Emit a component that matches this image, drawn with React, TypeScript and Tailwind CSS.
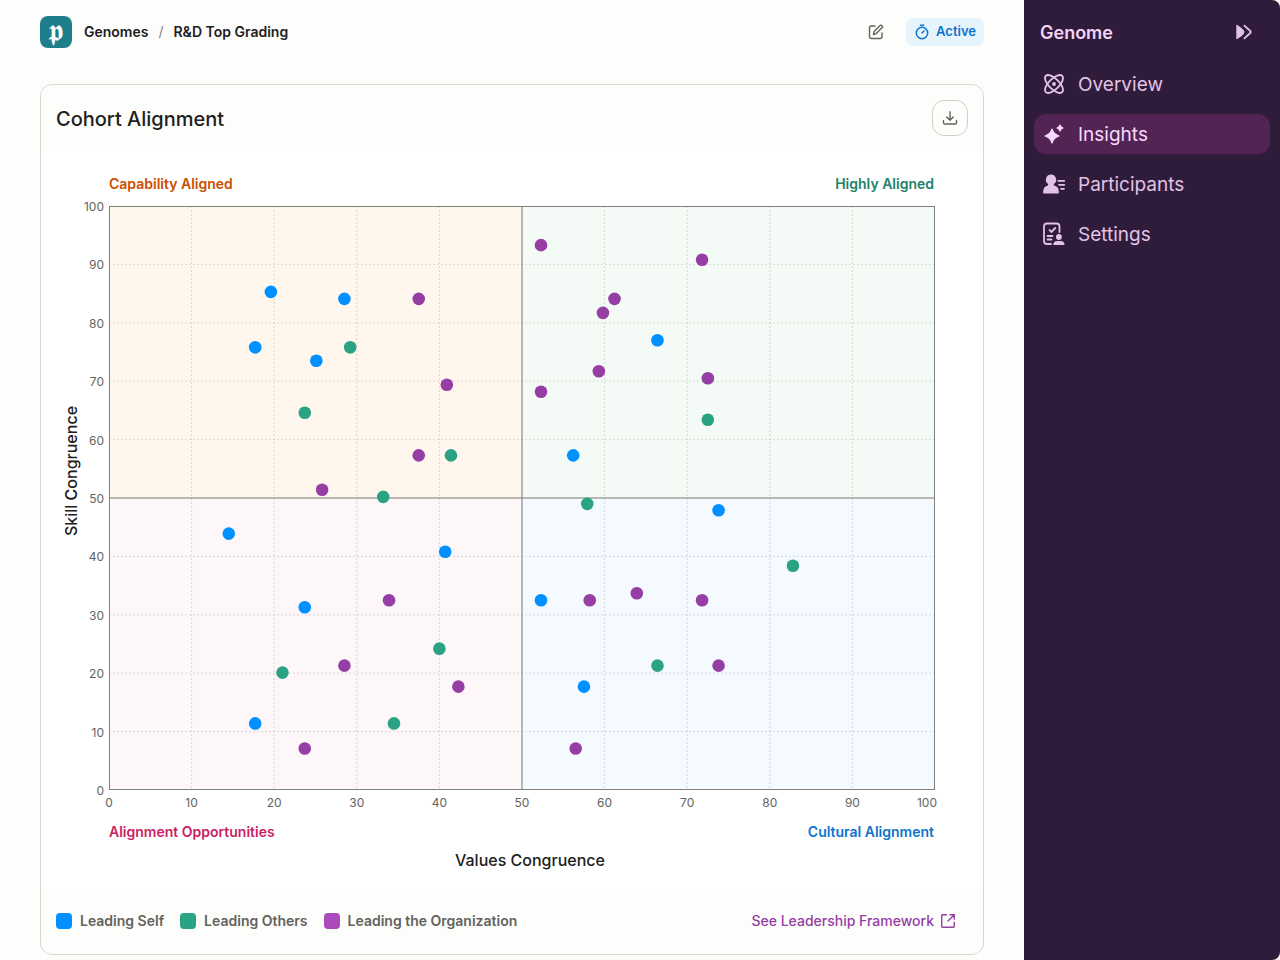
import React from 'react';

type Series = 'self' | 'others' | 'organization';

interface Point {
  x: number;
  y: number;
  series: Series;
}

const PLOT = { left: 68, top: 54, width: 826, height: 584 };

const DOT_COLORS: Record<Series, string> = {
  self: '#0090ff',
  others: '#29a383',
  organization: '#953ea3',
};

const toPoints = (series: Series, pairs: number[][]): Point[] =>
  pairs.map(([x, y]) => ({ x, y, series }));

const points: Point[] = [
  ...toPoints('self', [
    [19.6, 85.3], [28.5, 84.1], [17.7, 75.8], [25.1, 73.5], [14.5, 43.9], [40.7, 40.8], [23.7, 31.3],
    [17.7, 11.4], [66.4, 77], [56.2, 57.3], [73.8, 47.9], [52.3, 32.5], [57.5, 17.7],
  ]),
  ...toPoints('others', [
    [29.2, 75.8], [23.7, 64.6], [41.4, 57.3], [33.2, 50.2], [57.9, 49], [72.5, 63.4],
    [82.8, 38.4], [66.4, 21.3], [40, 24.2], [21, 20.1], [34.5, 11.4],
  ]),
  ...toPoints('organization', [
    [37.5, 84.1], [40.9, 69.4], [37.5, 57.3], [25.8, 51.4], [33.9, 32.5], [28.5, 21.3], [42.3, 17.7],
    [23.7, 7.1], [52.3, 93.3], [71.8, 90.8], [61.2, 84.1], [59.8, 81.7], [59.3, 71.7], [52.3, 68.2],
    [72.5, 70.5], [63.9, 33.7], [58.2, 32.5], [71.8, 32.5], [73.8, 21.3], [56.5, 7.1],
  ]),
];

const ticks = [0, 10, 20, 30, 40, 50, 60, 70, 80, 90, 100];
const gridTicks = [10, 20, 30, 40, 60, 70, 80, 90];

const scaleX = (v: number) => PLOT.left + (v / 100) * PLOT.width;
const scaleY = (v: number) => PLOT.top + PLOT.height - (v / 100) * PLOT.height;

const AlignmentChart: React.FC = () => {
  const right = PLOT.left + PLOT.width;
  const bottom = PLOT.top + PLOT.height;
  const midX = scaleX(50);
  const midY = scaleY(50);

  return (
    <svg viewBox="0 0 942 736" className="block w-full h-auto" role="img" aria-label="Cohort alignment scatter chart">
      <rect x={PLOT.left} y={PLOT.top} width={midX - PLOT.left} height={midY - PLOT.top} fill="#fff6ed" />
      <rect x={midX} y={PLOT.top} width={right - midX} height={midY - PLOT.top} fill="#f4faf6" />
      <rect x={PLOT.left} y={midY} width={midX - PLOT.left} height={bottom - midY} fill="#fef7fa" />
      <rect x={midX} y={midY} width={right - midX} height={bottom - midY} fill="#f4faff" />

      <g stroke="#8d8d86" strokeOpacity="0.3" strokeDasharray="2 2">
        {gridTicks.map((t) => (
          <React.Fragment key={t}>
            <line x1={scaleX(t)} x2={scaleX(t)} y1={PLOT.top} y2={bottom} />
            <line x1={PLOT.left} x2={right} y1={scaleY(t)} y2={scaleY(t)} />
          </React.Fragment>
        ))}
      </g>

      <g stroke="#82827c" strokeOpacity="0.55" strokeWidth="2">
        <line x1={midX} x2={midX} y1={PLOT.top} y2={bottom} />
        <line x1={PLOT.left} x2={right} y1={midY} y2={midY} />
      </g>
      <rect x={PLOT.left + 0.5} y={PLOT.top + 0.5} width={PLOT.width - 1} height={PLOT.height - 1} fill="none" stroke="#82827c" />

      {points.map((p, i) => (
        <circle key={i} cx={scaleX(p.x)} cy={scaleY(p.y)} r="6.3" fill={DOT_COLORS[p.series]} />
      ))}

      <g className="text-[12px]" fill="#63635e">
        {ticks.map((t) => (
          <React.Fragment key={t}>
            <text x="63" y={scaleY(t) + 5} textAnchor="end">{t}</text>
            <text x={t === 100 ? 896 : scaleX(t)} y="655" textAnchor={t === 100 ? 'end' : 'middle'}>{t}</text>
          </React.Fragment>
        ))}
      </g>

      <g className="text-[14px] font-semibold">
        <text x="68" y="37" fill="#cc4e00">Capability Aligned</text>
        <text x="893" y="37" textAnchor="end" fill="#208368">Highly Aligned</text>
        <text x="68" y="685" fill="#cb1d63">Alignment Opportunities</text>
        <text x="893" y="685" textAnchor="end" fill="#0d74ce">Cultural Alignment</text>
      </g>
      <g className="text-[16px] font-medium" fill="#21201c" textAnchor="middle">
        <text x="489" y="714">Values Congruence</text>
        <text transform="translate(36 319) rotate(-90)">Skill Congruence</text>
      </g>
    </svg>
  );
};

const EditIcon = () => (
  <svg className="w-4 h-4" viewBox="0 0 16 16" fill="none" stroke="currentColor" strokeWidth="1.4" strokeLinecap="round" strokeLinejoin="round" aria-hidden="true">
    <path d="M7 2H3.2Q1.5 2 1.5 3.7v9.1q0 1.7 1.7 1.7h9.1q1.7 0 1.7-1.7V9" />
    <path d="M5.5 10.5l.6-3 6-6q.8-.7 1.6 0l.5.5q.8.8 0 1.6l-6 6z" />
  </svg>
);

const TimerIcon = () => (
  <svg className="w-4 h-4" viewBox="0 0 16 16" fill="none" stroke="currentColor" strokeWidth="1.5" strokeLinecap="round" aria-hidden="true">
    <circle cx="8" cy="9" r="5.7" />
    <path d="M6.4 1.2h3.2M8 9l2-2" />
  </svg>
);

const DownloadIcon = () => (
  <svg className="w-4 h-4" viewBox="0 0 16 16" fill="none" stroke="currentColor" strokeWidth="1.4" strokeLinecap="round" strokeLinejoin="round" aria-hidden="true">
    <path d="M8 1.7v8.4M4.7 7L8 10.2 11.3 7M1.5 10.5v2.2q0 1.3 1.3 1.3h10.4q1.3 0 1.3-1.3v-2.2" />
  </svg>
);

const ExternalIcon = () => (
  <svg className="w-4 h-4" viewBox="0 0 16 16" fill="none" stroke="currentColor" strokeWidth="1.4" strokeLinecap="round" strokeLinejoin="round" aria-hidden="true">
    <path d="M6.5 1.7H2.7q-1 0-1 1v10.6q0 1 1 1h10.6q1 0 1-1V9.5M10 1.7h4.3V6M14.3 1.7L8 8" />
  </svg>
);

const CollapseIcon = () => (
  <svg className="w-4 h-4" viewBox="0 0 16 16" fill="currentColor" aria-hidden="true">
    <path d="M.3 1.8Q.3.2 1.7 1.2Q8.5 5.6 8.5 8Q8.500 10.400 1.700 14.800Q.3 15.800.3 14.200z" />
    <path d="M8.400 1.600L14.300 7q1 1 0 2L8.400 14.400" fill="none" stroke="currentColor" strokeWidth="1.800" strokeLinecap="round" />
  </svg>
);

const AtomIcon = () => (
  <svg className="w-6 h-6" viewBox="0 0 24 24" fill="none" stroke="currentColor" strokeWidth="1.8" aria-hidden="true">
    <path d="M20.2 20.2c2.04-2.03.02-7.36-4.5-11.9-4.54-4.52-9.87-6.54-11.9-4.5-2.04 2.03-.02 7.36 4.5 11.9 4.54 4.52 9.87 6.54 11.9 4.5Z" />
    <path d="M15.7 15.7c4.52-4.54 6.54-9.87 4.5-11.9-2.03-2.04-7.36-.02-11.9 4.5-4.52 4.54-6.54 9.87-4.5 11.9 2.03 2.04 7.36.02 11.9-4.5Z" />
    <circle cx="12" cy="12" r="1.9" fill="currentColor" stroke="none" />
  </svg>
);

const SparkleIcon = () => (
  <svg className="w-6 h-6" viewBox="0 0 24 24" fill="currentColor" stroke="currentColor" strokeWidth="1.2" strokeLinejoin="round" aria-hidden="true">
    <path d="M10 7Q11.6 12.400 17 14Q11.600 15.600 10 21Q8.400 15.600 3 14Q8.400 12.400 10 7z" />
    <path d="M18 3Q18.700 5.300 21 6Q18.700 6.700 18 9Q17.300 6.700 15 6Q17.300 5.300 18 3z" />
  </svg>
);

const ParticipantsIcon = () => (
  <svg className="w-6 h-6" viewBox="0 0 24 24" fill="currentColor" aria-hidden="true">
    <path d="M9 2.5a5.2 5.2 0 0 1 3.4 9.1q-1 .9-.4 1.9q4.800 1.200 4.800 6v1.500q0 .5-.5.5H1.700q-.5 0-.5-.5v-1.500q0-4.800 4.800-6q.6-1-.4-1.900A5.200 5.200 0 0 1 9 2.500z" />
    <path d="M16.200 8.800h6.100M17 12.800h5.300M19 16.800h3" stroke="currentColor" strokeWidth="1.700" strokeLinecap="round" />
  </svg>
);

const SettingsIcon = () => (
  <svg className="w-6 h-6" viewBox="0 0 24 24" fill="none" stroke="currentColor" strokeWidth="1.8" strokeLinecap="round" strokeLinejoin="round" aria-hidden="true">
    <path d="M9 22H5q-3 0-3-3V4.500q0-3 3-3h9.500q3 0 3 3V10" />
    <path d="M7.500 8l1.800 2 4-4M5.500 14h5M5.500 17.500h4" />
    <circle cx="16.900" cy="15" r="2.900" fill="currentColor" stroke="none" />
    <path d="M11.300 23q0-4 3.900-4h3.400q3.900 0 3.900 4z" fill="currentColor" stroke="none" />
  </svg>
);

const navItems = [
  { label: 'Overview', Icon: AtomIcon, active: false },
  { label: 'Insights', Icon: SparkleIcon, active: true },
  { label: 'Participants', Icon: ParticipantsIcon, active: false },
  { label: 'Settings', Icon: SettingsIcon, active: false },
];

const legend = [
  { label: 'Leading Self', swatch: 'bg-[#0090ff]' },
  { label: 'Leading Others', swatch: 'bg-[#29a383]' },
  { label: 'Leading the Organization', swatch: 'bg-[#ab4aba]' },
];

const Sidebar: React.FC = () => (
  <aside className="w-64 shrink-0 rounded-r-lg bg-[#2f1c3b] px-2.5 text-[#e3c2e6]">
    <div className="flex items-center justify-between h-16 pl-1.5 pr-4.5">
      <h2 className="pt-0.5 text-lg font-semibold text-[#f3d4f7]">Genome</h2>
      <button type="button" aria-label="Collapse sidebar">
        <CollapseIcon />
      </button>
    </div>
    <nav className="flex flex-col gap-2.5">
      {navItems.map(({ label, Icon, active }) => (
        <a
          key={label}
          href="#"
          aria-current={active ? 'page' : undefined}
          className={`flex items-center gap-3 h-10 px-2 rounded-xl text-[19px] ${active ? 'bg-[#512454] text-[#f8d8fb]' : ''}`}
        >
          <Icon />
          <span className="pt-0.5">{label}</span>
        </a>
      ))}
    </nav>
  </aside>
);

const App: React.FC = () => {
  return (
    <div className="flex min-h-screen bg-[#fdfdfc] font-['Inter',sans-serif] text-[#21201c]">
      <main className="flex-1 min-w-0 px-10 pb-1">
        <header className="flex items-center justify-between h-16">
          <nav aria-label="Breadcrumb" className="flex items-center text-sm font-semibold">
            <span className="flex items-center justify-center w-8 h-8 mr-3 pr-px pb-1 rounded-lg bg-[#1f7e8c] text-white text-[30px] font-normal leading-none" aria-hidden="true">𝖕</span>
            <a href="#">Genomes</a>
            <span className="px-2.5 font-normal text-[#82827c]">/</span>
            <a href="#" aria-current="page">R&amp;D Top Grading</a>
          </nav>
          <div className="flex items-center gap-5.5">
            <button type="button" aria-label="Edit" className="text-[#63635e]">
              <EditIcon />
            </button>
            <span className="flex items-center gap-1.5 h-7 px-2 rounded-lg bg-[#e6f4fe] text-[13px] font-semibold text-[#0d74ce]">
              <TimerIcon />
              Active
            </span>
          </div>
        </header>

        <section className="mt-5 border border-[#dad9d6] rounded-xl overflow-hidden">
          <div className="flex items-center justify-between h-[67px] px-[15px] pb-px">
            <h1 className="pt-0.5 text-xl font-medium">Cohort Alignment</h1>
            <button type="button" aria-label="Download chart" className="flex items-center justify-center w-9 h-9 rounded-xl border border-[#cfceca] text-[#63635e]">
              <DownloadIcon />
            </button>
          </div>

          <div className="bg-white">
            <AlignmentChart />
          </div>

          <div className="flex flex-wrap items-center justify-between gap-x-4 min-h-[66px] pl-[15px] pr-[27px] text-sm font-semibold">
            <ul className="flex items-center gap-4 text-[#63635e]">
              {legend.map(({ label, swatch }) => (
                <li key={label} className="flex items-center gap-2">
                  <span className={`w-4 h-4 rounded ${swatch}`} />
                  {label}
                </li>
              ))}
            </ul>
            <a href="#" className="flex items-center gap-1.5 font-medium text-[#953ea3]">
              See Leadership Framework
              <ExternalIcon />
            </a>
          </div>
        </section>
      </main>
      <Sidebar />
    </div>
  );
};

export default App;
